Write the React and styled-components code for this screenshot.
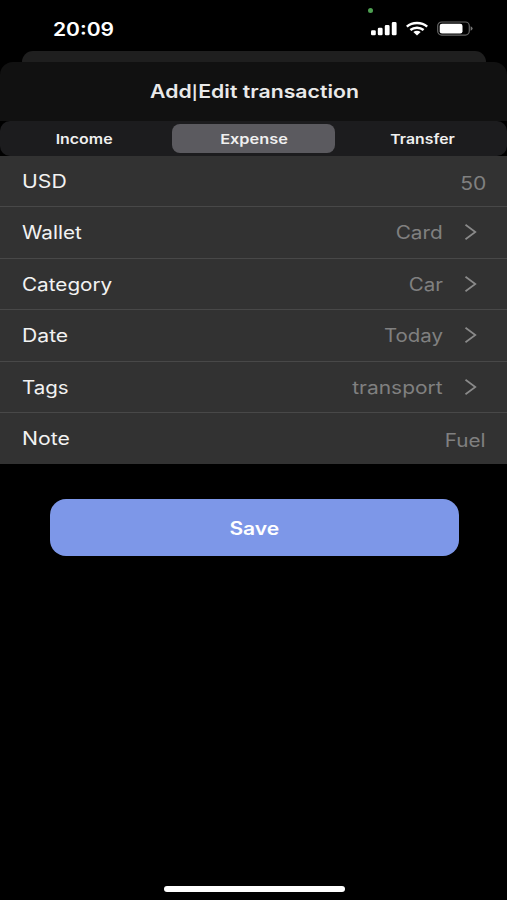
import React, { useState } from "react";
import styled, { createGlobalStyle } from "styled-components";

// styled [start]
const GlobalStyle = createGlobalStyle`
	* {
		box-sizing: border-box;
	}
	body {
		margin: 0;
		background: #000;
		font-family: Inter, "Liberation Sans", sans-serif;
	}
`;

const Screen = styled("div")`
	display: flex;
	flex-direction: column;
	width: 507px;
	height: 900px;
	overflow: hidden;
	background: #000;
	color: #f2f2f2;
`;

const StatusBar = styled("header")`
	position: relative;
	display: flex;
	align-items: center;
	justify-content: space-between;
	height: 51px;
	padding: 6px 34px 0 53px;
`;

// wide lettering, stretched from the side it is aligned to
const Wide = styled("span")`
	display: inline-block;
	white-space: nowrap;
	transform: scaleX(${(props) => props.$stretch || 1.17});
	transform-origin: ${(props) => props.$from || "left"} center;
`;

const Clock = styled("div")`
	padding-top: 2px;
	font-size: 18px;
	font-weight: 600;
	line-height: 22px;
	color: #fff;
`;

const StatusIcons = styled("svg")`
	display: block;
	width: 103px;
	height: 16px;
`;

const CameraDot = styled("i")`
	position: absolute;
	top: 8px;
	left: 368px;
	width: 5px;
	height: 5px;
	border-radius: 50%;
	background: #4ea052;
`;

const BackSheet = styled("div")`
	flex: none;
	height: 11px;
	margin: 0 21px 0 22px;
	border-radius: 11px 11px 0 0;
	background: #1f1f1f;
`;

const SheetHeader = styled("div")`
	display: flex;
	flex: none;
	align-items: center;
	justify-content: center;
	height: 59px;
	padding-left: 1px;
	border-radius: 13px 13px 0 0;
	background: #111;
`;

const Title = styled("h1")`
	margin: 0;
	font-size: 18px;
	font-weight: 600;
	line-height: 22px;
	color: #e9e9e9;
`;

const Pipe = styled("span")`
	font-size: 14px;
	line-height: 1;
	letter-spacing: 0.5px;
`;

const Segments = styled("div")`
	display: grid;
	flex: none;
	grid-template-columns: 170px 167px 170px;
	height: 34.5px;
	padding: 2.5px 0;
	border-radius: 10px;
	background: #1c1c1e;
`;

const Segment = styled("button")`
	margin: 0 2px;
	padding: 1px ${(props) => props.$right || "0"} 0 ${(props) => props.$left || "0"};
	border: 0;
	border-radius: 8px;
	background: ${(props) => (props.$active ? "#5b5a5f" : "transparent")};
	color: #f0f0f0;
	font-family: inherit;
	font-size: 13.5px;
	font-weight: 600;
	line-height: 16px;
`;

const Row = styled("div")`
	display: flex;
	flex: none;
	align-items: center;
	justify-content: space-between;
	height: 51.5px;
	padding: 2px 21px 0 22px;
	border-bottom: 1px solid #484848;
	background: #323232;
	font-size: 18px;
	line-height: 22px;

	&:last-child {
		height: 50.9px;
		border-bottom-color: #323232;
	}
`;

const RowValue = styled("div")`
	display: flex;
	align-items: center;
	color: #808080;
	padding-top: ${(props) => (props.$input ? "4px" : "0")};
`;

const Chevron = styled("svg")`
	display: block;
	width: 13px;
	height: 18px;
	margin: -1px 9px 1px 21px;
`;

const SaveButton = styled("button")`
	flex: none;
	height: 57.5px;
	margin: 35px 48.5px 0 50px;
	padding: 2px 0 0;
	border: 0;
	border-radius: 16px;
	background: #7d97e8;
	color: #fff;
	font-family: inherit;
	font-size: 18px;
	font-weight: 600;
`;

const HomeIndicator = styled("div")`
	flex: none;
	width: 181px;
	height: 6px;
	margin: auto auto 8px 164px;
	border-radius: 3px;
	background: #fff;
`;
// styled [end]

const TypeList = [
	{ value: 0, label: "Income", stretch: 1.18, right: "1px" },
	{ value: 1, label: "Expense", stretch: 1.21 },
	{ value: 2, label: "Transfer", stretch: 1.17, left: "2px" },
];

const FieldList = [
	{ label: "USD", value: "50", input: true, stretch: 1.18 },
	{ label: "Wallet", value: "Card", stretch: 1.15, valueStretch: 1.155 },
	{ label: "Category", value: "Car", stretch: 1.15, valueStretch: 1.14 },
	{ label: "Date", value: "Today", stretch: 1.175, valueStretch: 1.135 },
	{ label: "Tags", value: "transport", stretch: 1.14, valueStretch: 1.165 },
	{ label: "Note", value: "Fuel", input: true, stretch: 1.18, valueStretch: 1.15 },
];

function TransactionPage() {
	const [Type, setType] = useState(1);

	return (
		<Screen>
			<GlobalStyle />
			<StatusBar>
				<Clock>
					<Wide>20:09</Wide>
				</Clock>
				<CameraDot />
				<StatusIcons viewBox="0 0 103 16">
					{/* signal */}
					<g fill="#fff">
						<rect x="1" y="9.3" width="4.8" height="5" rx="1.3" />
						<rect x="7.8" y="6.8" width="4.8" height="7.5" rx="1.3" />
						<rect x="14.8" y="4.1" width="4.8" height="10.2" rx="1.3" />
						<rect x="21.8" y="1.1" width="4.8" height="13.2" rx="1.3" />
					</g>
					{/* wifi */}
					<g fill="none" stroke="#fff" strokeWidth="2.5">
						<path d="M36.8 5.6C42.5 0.9 51.5 0.9 57.2 5.6" />
						<path d="M40.4 9C44.2 5.9 49.8 5.9 53.6 9" />
					</g>
					<path d="M43.3 11.1C45.4 9.4 48.6 9.4 50.7 11.1L47 14.4Z" fill="#fff" />
					{/* battery */}
					<rect x="67.7" y="1" width="31.6" height="13.1" rx="4" fill="none" stroke="#666" strokeWidth="1.2" />
					<rect x="69.7" y="2.7" width="22.8" height="9.8" rx="2.3" fill="#fff" />
					<path d="M100.6 5.3Q102.6 6.1 102.6 7.5T100.6 9.7Z" fill="#777" />
				</StatusIcons>
			</StatusBar>

			<BackSheet />
			<SheetHeader>
				<Title>
					<Wide $from="center" $stretch={1.18}>
						Add<Pipe>|</Pipe>Edit transaction
					</Wide>
				</Title>
			</SheetHeader>

			<Segments>
				{TypeList.map((item, index) => (
					<Segment
						key={index}
						$active={item.value === Type}
						$left={item.left}
						$right={item.right}
						onClick={() => setType(item.value)}
					>
						<Wide $from="center" $stretch={item.stretch}>
							{item.label}
						</Wide>
					</Segment>
				))}
			</Segments>

			<div>
				{FieldList.map((item, index) => (
					<Row key={index}>
						<Wide $stretch={item.stretch}>{item.label}</Wide>
						<RowValue $input={item.input}>
							<Wide $from="right" $stretch={item.valueStretch}>
								{item.value}
							</Wide>
							{!item.input && (
								<Chevron viewBox="0 0 13 18">
									<path d="M1.5 1.7L11.3 9L1.5 16.3" fill="none" stroke="#8a8a8a" strokeWidth="1.7" />
								</Chevron>
							)}
						</RowValue>
					</Row>
				))}
			</div>

			<SaveButton>
				<Wide $from="center">Save</Wide>
			</SaveButton>

			<HomeIndicator />
		</Screen>
	);
}

export default TransactionPage;
